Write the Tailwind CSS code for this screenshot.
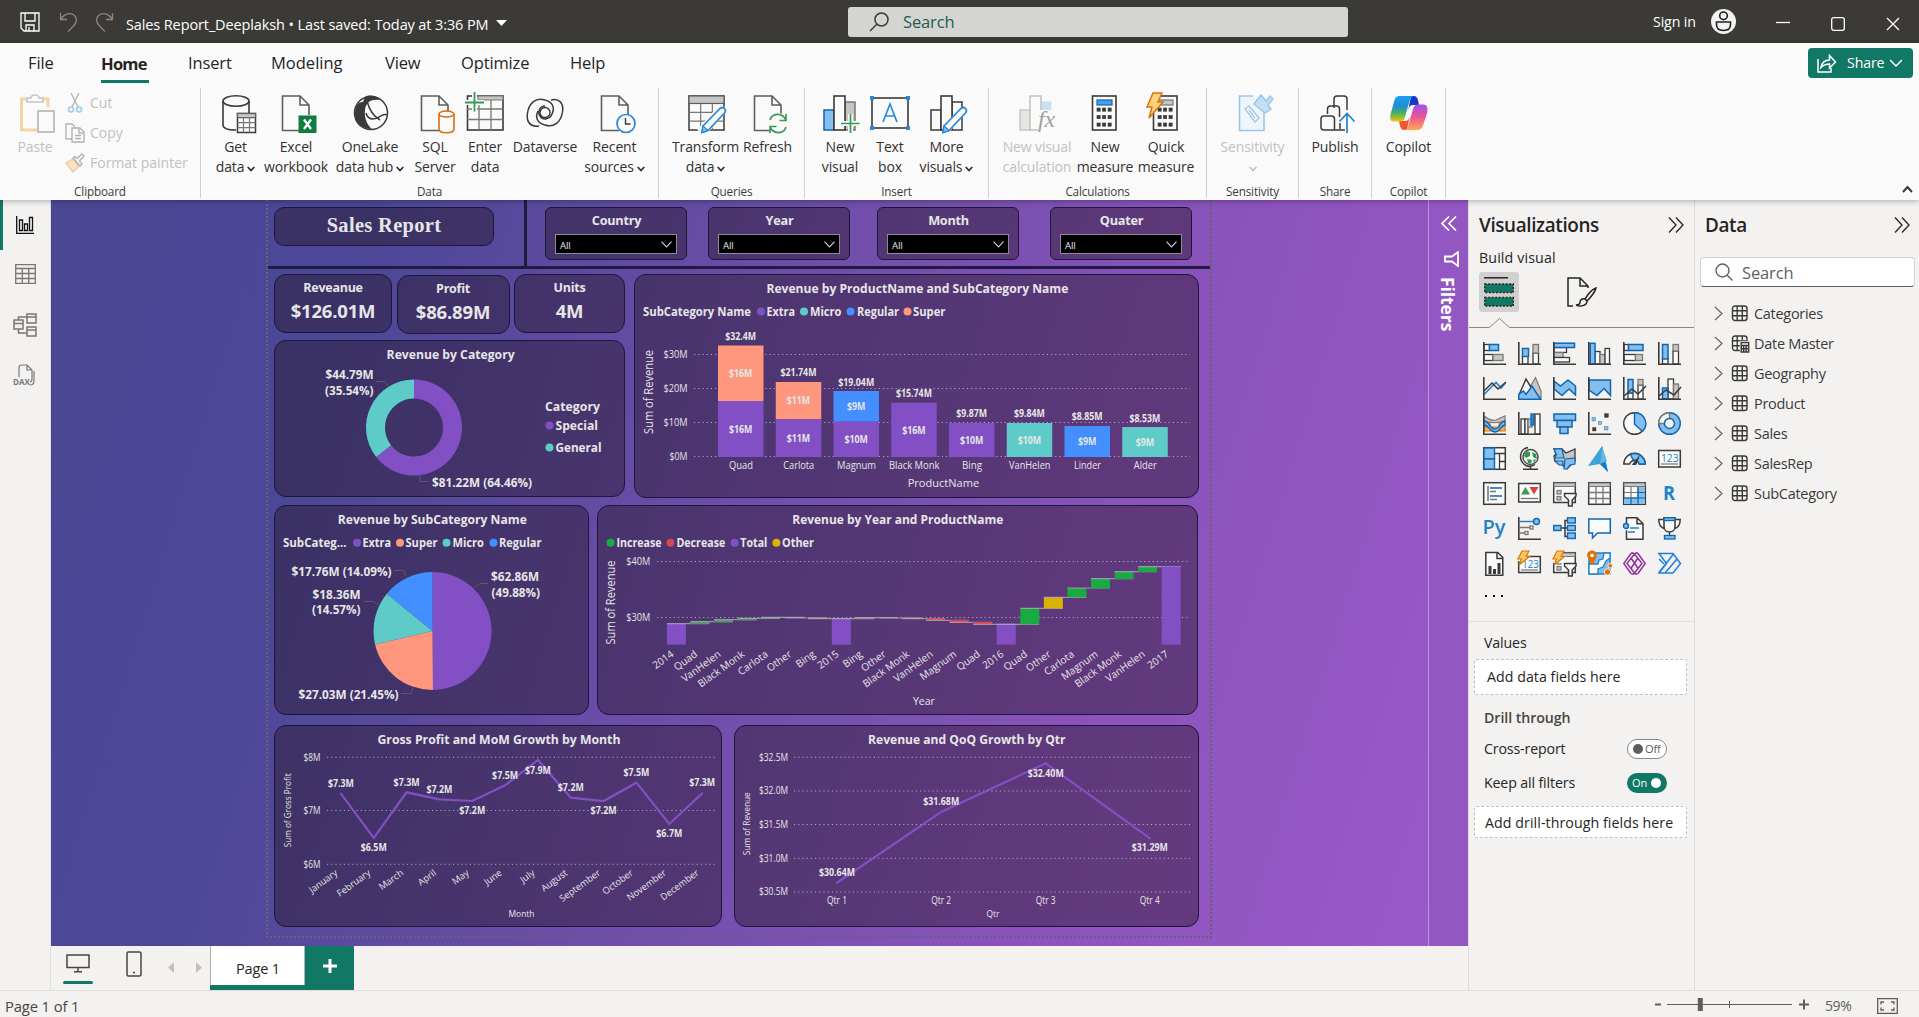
<!DOCTYPE html>
<html lang="en">
<head>
<meta charset="utf-8">
<title>Sales Report_Deeplaksh</title>
<script src="https://cdn.jsdelivr.net/npm/@tailwindcss/browser@4"></script>
</head>
<body class="w-[1919px] h-[1017px] overflow-hidden flex flex-col bg-[#f3f2f1] font-['Open_Sans',sans-serif] text-[14px] tracking-[-0.01em] text-[#252423] whitespace-nowrap">

<!-- Title bar -->
<header class="h-[43px] shrink-0 bg-[#3b3a37] text-white flex items-center">
  <svg class="ml-5 w-5 h-5" viewBox="0 0 20 20" fill="none" stroke="#fff" stroke-width="1.3"><path d="M1 1h18v18H4l-3-3zM5 1v8h10V1M6 19v-6h8v6M9 15v4"/></svg>
  <svg class="ml-[19px] w-[19px] h-5" viewBox="0 0 19 20" fill="none" stroke="#8a8886" stroke-width="1.3"><path d="M1.500 1v6.500h6.500M1.500 7.500C5 2 10 0.500 14 2.500c5 3 4 8 0 12l-5 5"/></svg>
  <svg class="ml-[17px] w-[19px] h-5" viewBox="0 0 19 20" fill="none" stroke="#8a8886" stroke-width="1.300"><path d="M17.500 1v6.500H11M17.500 7.500C14 2 9 0.500 5 2.500c-5 3-4 8 0 12l5 5"/></svg>
  <div class="ml-[12px] w-[362px] pt-[6px] text-[14.500px] tracking-[-0.008em]">Sales Report_Deeplaksh • Last saved: Today at 3:36 PM</div>
  <svg class="ml-[8px] mt-[2px] w-[11px] h-[6px]" viewBox="0 0 11 6"><path d="M0 0h11L5.500 6z" fill="#fff"/></svg>
  <div class="ml-[341px] w-[500px] h-[30px] rounded-[3px] bg-[#d4d4d2] flex items-center text-[#215c50]">
    <svg class="ml-[21px] w-5 h-5" viewBox="0 0 20 20" fill="none" stroke="#3b3a39" stroke-width="1.500"><circle cx="12.500" cy="7.500" r="6.500"/><path d="M8 12 1 19"/></svg>
    <div class="ml-[14px] pt-px text-[16.5px]">Search</div>
  </div>
  <div class="ml-[305px] w-[47px] text-[14.2px]">Sign in</div>
  <svg class="ml-[11px] w-[25px] h-[25px]" viewBox="0 0 25 25"><circle cx="12.500" cy="12.500" r="12.500" fill="#f3f2f1"/><g fill="none" stroke="#222" stroke-width="1.600"><circle cx="12.500" cy="6.800" r="3.800"/><path d="M5.500 13h14v2.500c0 4-3 6-7 6s-7-2-7-6z"/></g></svg>
  <svg class="ml-[40px] w-[14px] h-[14px]" viewBox="0 0 14 14" stroke="#fff" stroke-width="1.300"><path d="M0 7.500h14"/></svg>
  <svg class="ml-[41px] mt-1 w-[14px] h-[14px]" viewBox="0 0 14 14" fill="none" stroke="#fff" stroke-width="1.300"><rect x=".7" y=".7" width="12.600" height="12.600" rx="2"/></svg>
  <svg class="ml-[41px] mt-1 w-[14px] h-[14px]" viewBox="0 0 14 14" stroke="#fff" stroke-width="1.300"><path d="M1 1l12 12M13 1 1 13"/></svg>
</header>

<!-- Ribbon -->
<section class="h-[157px] shrink-0 bg-[#fafafa] relative z-10 shadow-[0_1px_6px_rgba(0,0,0,.3)]">
  <nav class="h-[45px] pl-7 flex items-center text-[16.5px]">
    <div class="w-[73px] pb-[5px]">File</div>
    <div class="w-[87px] flex"><div class="font-bold h-[30px] leading-[22px] tracking-[-0.045em] border-b-3 border-[#117865] mt-1 w-[48px]">Home</div></div>
    <div class="w-[83px] pb-[5px]">Insert</div>
    <div class="w-[114px] pb-[5px] tracking-[0]">Modeling</div>
    <div class="w-[76px] pb-[5px]">View</div>
    <div class="w-[109px] pb-[5px]">Optimize</div>
    <div class="pb-[5px]">Help</div>
    <div class="ml-auto mr-[6px] -mt-[5px] w-[105px] h-[30px] rounded bg-[#117865] text-white flex items-center text-[14.2px]">
      <svg class="ml-[9px] w-[20px] h-[19px]" viewBox="0 0 20 19" fill="none" stroke="#fff" stroke-width="1.500"><path d="M1 5v13h13v-4M4 13.500C5 8 8 6 12.500 6V1.500l6 6.500-6 6V10C9 10 6.500 11 4 13.500z"/></svg>
      <div class="ml-[10px] w-[38px]">Share</div>
      <svg class="ml-[5px] w-3 h-2" viewBox="0 0 12 8" fill="none" stroke="#fff" stroke-width="1.500"><path d="M0 1l6 6 6-6"/></svg>
    </div>
  </nav>

  <div class="h-[110px] flex leading-5" id="ribbon">
    <div class="w-[201px] border-r border-[#d2d0ce] flex flex-col justify-between items-center text-[#c3c1bf]">
      <div class="w-full flex">
        <div class="w-[70px] pt-[5px] flex flex-col items-center">
          <svg class="w-10 h-10" viewBox="0 0 40 40" fill="none" stroke-width="1.600"><path d="M11 6H6.500v31H22M28 6h5v8" stroke="#f3d5a5" stroke-width="3"/><path d="M12 9V5h4c0-4 8-4 8 0h4v4z" stroke="#c8c6c4" fill="#fafafa"/><rect x="23" y="18" width="16" height="21" fill="#fafafa" stroke="#b5b3b1"/></svg>
          <div class="pt-[4px]">Paste</div>
        </div>
        <div class="flex flex-col gap-[10px] pt-[5px] tracking-[0]">
          <div class="flex items-center h-5 -ml-[5px]"><svg class="w-[20px] h-[20px]" viewBox="0 0 20 20" fill="none" stroke="#b5b3b1" stroke-width="1.300"><path d="M6 0l7 14M14 0L7 14"/><g stroke="#9fcbe6" stroke-width="1.600"><circle cx="6" cy="16.500" r="2.500"/><circle cx="14" cy="16.500" r="2.500"/></g></svg><div class="ml-[5px]">Cut</div></div>
          <div class="flex items-center h-5 -ml-[5px]"><svg class="w-[20px] h-[20px]" viewBox="0 0 20 20" fill="#fafafa" stroke="#b5b3b1" stroke-width="1.400"><path d="M7 16H1V1h6l3 3"/><path d="M7 5h8l4 4v10H7zM14 5v5h5M10 12.500h6M10 15.500h6"/></svg><div class="ml-[5px]">Copy</div></div>
          <div class="flex items-center h-5 -ml-[5px]"><svg class="w-[20px] h-[20px]" viewBox="0 0 20 20" fill="none" stroke="#b5b3b1" stroke-width="1.400"><path d="M1 10l7-4 6 7-6 6z" fill="#f9e3c4" stroke="#efc99a"/><path d="M8 5l7 8 2-2-2.500-3L19 3l-2-2-5 4.500L10 3.500z" fill="#fafafa"/></svg><div class="ml-[5px]">Format painter</div></div>
        </div>
      </div>
      <div class="text-[11.700px] text-[#3b3a39] leading-[14px]">Clipboard</div>
    </div>

    <div class="w-[458px] border-r border-[#d2d0ce] flex flex-col justify-between items-center">
      <div class="w-full pl-[2px] flex" data-buttons="data"></div>
      <div class="text-[11.700px] text-[#3b3a39] leading-[14px]">Data</div>
    </div>
    <div class="w-[146px] border-r border-[#d2d0ce] flex flex-col justify-between items-center">
      <div class="w-full pl-[7px] flex" data-buttons="queries"></div>
      <div class="text-[11.700px] text-[#3b3a39] leading-[14px]">Queries</div>
    </div>
    <div class="w-[184px] border-r border-[#d2d0ce] flex flex-col justify-between items-center">
      <div class="w-full pl-[9px] flex" data-buttons="insert"></div>
      <div class="text-[11.700px] text-[#3b3a39] leading-[14px]">Insert</div>
    </div>
    <div class="w-[218px] border-r border-[#d2d0ce] flex flex-col justify-between items-center">
      <div class="w-full pl-[12px] flex" data-buttons="calc"></div>
      <div class="text-[11.700px] text-[#3b3a39] leading-[14px]">Calculations</div>
    </div>
    <div class="w-[92px] border-r border-[#d2d0ce] flex flex-col justify-between items-center">
      <div class="w-full flex" data-buttons="sens"></div>
      <div class="text-[11.700px] text-[#3b3a39] leading-[14px]">Sensitivity</div>
    </div>
    <div class="w-[73px] border-r border-[#d2d0ce] flex flex-col justify-between items-center">
      <div class="w-full flex" data-buttons="share"></div>
      <div class="text-[11.700px] text-[#3b3a39] leading-[14px]">Share</div>
    </div>
    <div class="w-[74px] border-r border-[#d2d0ce] flex flex-col justify-between items-center">
      <div class="w-full flex" data-buttons="copilot"></div>
      <div class="text-[11.700px] text-[#3b3a39] leading-[14px]">Copilot</div>
    </div>
    <div class="ml-auto mr-[6px] flex items-end pb-[5px]"><svg class="w-[11px] h-[8px]" viewBox="0 0 11 8" fill="none" stroke="#3b3a39" stroke-width="2"><path d="M1 7l4.500-5L10 7"/></svg></div>
  </div>
</section>

<!-- Workspace -->
<main class="h-[790px] shrink-0 flex">
  <aside class="w-[51px] border-r border-[#e1dfdd] flex flex-col">
    <div class="h-[50px] border-l-3 border-[#117865] flex items-center justify-center"><svg class="-ml-[4px] w-[18px] h-[18px]" viewBox="0 0 18 18" fill="none" stroke="#111" stroke-width="1.300"><path d="M.7 0v17.300H18M3.500 4h3v10.500h-3zM8.500 8h3v6.500h-3zM13.500 1.500h3v13h-3z"/></svg></div>
    <div class="h-[48px] flex items-center justify-center"><svg class="w-[21px] h-[20px]" viewBox="0 0 21 20" fill="none" stroke="#797775" stroke-width="1.300"><path d="M.7.7h19.600v18.600H.7zM.7 4.500h19.600M.7 9.500h19.600M.7 14.500h19.600M7.300 4.500v15M13.700 4.500v15"/></svg></div>
    <div class="h-[53px] flex items-center justify-center"><svg class="w-[24px] h-[24px]" viewBox="0 0 24 24" fill="none" stroke="#797775" stroke-width="1.500"><path d="M1 7h9v9H1zM1 10.500h9M14 1h9v9h-9zM14 4h9M14 14h9v9h-9zM14 17h9M5.500 7V4H14M5.500 16v4H14"/></svg></div>
    <div class="h-[48px] flex items-center justify-center"><svg class="-ml-[2px] w-[24px] h-[26px] overflow-visible" viewBox="0 0 24 26" fill="none" stroke="#797775" stroke-width="1.200"><path d="M7 15V6c0-2 1-3 3-3h5l5 5v9c0 2-1 3-2 3M15 3v5h5M22 9v10c0 2-1 4-4 4"/><text x="1" y="23" font-size="8.500" font-weight="700" letter-spacing="0" fill="#797775" stroke="none" textLength="17" lengthAdjust="spacingAndGlyphs">DAX</text></svg></div>
  </aside>

  <div class="w-[1417px] flex flex-col">
    <div class="h-[746px] flex">
      <div class="w-[1377px] bg-[linear-gradient(107deg,#4b4795_0%,#4c4796_20%,#6f4eab_49%,#8953bb_73%,#9a59ca_100%)]">
        <div class="ml-[215px] w-[946px] h-[738px] border-x-2 border-b-2 border-dotted border-[#65646a] text-[#e6e6e6]">
          <div class="h-[65px] flex items-start">
            <div class="mt-[7px] ml-[6px] w-[220px] h-[39px] rounded-[10px] border border-[#1c1838] bg-[rgba(32,18,28,.4)] flex items-center justify-center font-['Liberation_Serif',serif] font-bold text-[20.5px] tracking-[0.015em] pb-[2px]">Sales Report</div>
            <div class="ml-[30px] w-[3px] h-[66px] bg-[#1f1a3a]"></div>
            <div class="mt-[7px] ml-[18px] flex" id="slicers"></div>
          </div>
          <div class="h-[3px] mt-[0.5px] bg-[#231a42]"></div>

          <div class="mt-[5px] ml-[6px] flex">
            <div class="w-[351px]">
              <div class="flex gap-[4.5px] pt-[0.5px] font-bold text-center">
                <div class="w-[118px] h-[59px] rounded-[12px] border border-[#1c1838] bg-[rgba(32,18,28,.4)] pt-[4px]"><div class="text-[12.500px] leading-[18px] tracking-[-0.02em]">Reveanue</div><div class="text-[18.500px] leading-7 tracking-[-0.01em]">$126.01M</div></div>
                <div class="mt-px w-[113px] h-[59px] rounded-[12px] border border-[#1c1838] bg-[rgba(32,18,28,.4)] pt-[4px]"><div class="text-[12.500px] leading-[18px] tracking-[-0.02em]">Profit</div><div class="text-[18.500px] leading-7 tracking-[-0.01em]">$86.89M</div></div>
                <div class="w-[111px] h-[59px] rounded-[12px] border border-[#1c1838] bg-[rgba(32,18,28,.4)] pt-[4px]"><div class="text-[12.500px] leading-[18px] tracking-[-0.02em]">Units</div><div class="text-[18.500px] leading-7 tracking-[-0.01em]">4M</div></div>
              </div>
              <div class="mt-[6px] w-[351px] h-[157px] rounded-[12px] border border-[#1c1838] bg-[rgba(32,18,28,.4)]"><svg class="w-full h-full" viewBox="275 341 349 155" id="donut"></svg></div>
            </div>
            <div class="ml-[9px] w-[565px] h-[224px] rounded-[12px] border border-[#1c1838] bg-[rgba(32,18,28,.4)]"><svg class="w-full h-full" viewBox="635 275 563 222" id="stack"></svg></div>
          </div>

          <div class="mt-[7px] ml-[6px] flex gap-2">
            <div class="w-[315px] h-[210px] rounded-[12px] border border-[#1c1838] bg-[rgba(32,18,28,.4)]"><svg class="w-full h-full" viewBox="275 506 313 208" id="pie"></svg></div>
            <div class="w-[601px] h-[210px] rounded-[12px] border border-[#1c1838] bg-[rgba(32,18,28,.4)]"><svg class="w-full h-full" viewBox="598 506 599 208" id="fall"></svg></div>
          </div>

          <div class="mt-[10px] ml-[6px] flex gap-3">
            <div class="w-[448px] h-[202px] rounded-[12px] border border-[#1c1838] bg-[rgba(32,18,28,.4)]"><svg class="w-full h-full" viewBox="275 726 446 200" id="mom"></svg></div>
            <div class="w-[465px] h-[202px] rounded-[12px] border border-[#1c1838] bg-[rgba(32,18,28,.4)]"><svg class="w-full h-full" viewBox="735 726 463 200" id="qoq"></svg></div>
          </div>
        </div>
      </div>
      <!-- Collapsed filter pane -->
      <div class="w-10 border-l border-[#b79ad0] bg-[#9357c3] text-white flex flex-col items-center">
        <svg class="mt-[16px] w-[16px] h-[15px]" viewBox="0 0 16 15" fill="none" stroke="#fff" stroke-width="1.700"><path d="M8 .5l-7 7 7 7M15 .5l-7 7 7 7"/></svg>
        <svg class="mt-[20px] ml-[6px] w-[15px] h-[16px]" viewBox="0 0 15 16" fill="none" stroke="#fff" stroke-width="1.800"><path d="M14 1v14L8 10.500H1v-5h7z"/></svg>
        <div class="mt-[10px] -ml-[1px] font-bold text-[17.500px] leading-5 tracking-[-0.005em] [writing-mode:vertical-rl]">Filters</div>
      </div>
    </div>
    <!-- Page tabs -->
    <div class="h-[44px] flex">
      <div class="ml-[12px] w-[30px] flex flex-col items-center justify-between pt-[8px] pb-[6px]"><svg class="w-[24px] h-[19px]" viewBox="0 0 24 19" fill="none" stroke="#484644" stroke-width="1.500"><path d="M1 1h22v12.500H1zM12 13.500V17M8 17.800h8"/></svg><div class="w-[30px] h-[3px] rounded-full bg-[#117865]"></div></div>
      <svg class="ml-[33px] mt-[5px] w-[16px] h-[26px]" viewBox="0 0 16 26" fill="none" stroke="#484644" stroke-width="1.500"><rect x="1" y="1" width="14" height="24" rx="1.500"/><path d="M7 21.500h2"/></svg>
      <svg class="ml-[26px] mt-[16px] w-[6px] h-[11px]" viewBox="0 0 6 11"><path d="M6 0v11L0 5.500z" fill="#c2c0be"/></svg>
      <svg class="ml-[22px] mt-[16px] w-[6px] h-[11px]" viewBox="0 0 6 11"><path d="M0 0v11l6-5.500z" fill="#c2c0be"/></svg>
      <div class="ml-[8px] w-[95px] bg-white border-x border-[#b3b0ad] flex flex-col"><div class="grow flex items-center justify-center pt-[6px] pl-px text-[14.500px]">Page 1</div><div class="h-[5px] bg-[#117865] -mx-px"></div></div>
      <div class="w-[49px] bg-[#117865] flex items-center justify-center pb-1"><svg class="w-[14px] h-[14px]" viewBox="0 0 14 14" stroke="#fff" stroke-width="3"><path d="M7 0v14M0 7h14"/></svg></div>
    </div>
  </div>

  <!-- Visualizations pane -->
  <aside class="w-[227px] border-x border-[#dddbd9] flex flex-col text-[14.2px]">
    <div class="pl-[10px] pt-[12px] h-[45px] flex items-start justify-between"><div class="font-semibold text-[18.900px] leading-[26px] tracking-[-0.02em]">Visualizations</div><svg class="mt-[5px] mr-[10px] w-[16px] h-[16px]" viewBox="0 0 16 16" fill="none" stroke="#252423" stroke-width="1.300"><path d="M1 .5l7 7.500-7 7.500M8 .5l7 7.500-7 7.500"/></svg></div>
    <div class="pl-[10px] h-[27px] leading-[26px] tracking-[0.01em]">Build visual</div>
    <div class="pl-[10px] h-[40px] flex items-center">
      <div class="w-10 h-10 rounded-[3px] bg-[#d2d0ce] flex items-center justify-center"><svg class="w-[30px] h-[30px]" viewBox="0 0 30 30" stroke="#252423"><path d="M0 .8h24" stroke-width="1.500"/><g fill="#117865" stroke-width="1.500" stroke-dasharray="2 1.500"><rect x=".7" y="7" width="28.600" height="8.500"/><rect x=".7" y="20.500" width="28.600" height="8.500"/></g></svg></div>
      <svg class="ml-[48px] w-[30px] h-[30px]" viewBox="0 0 30 30" fill="none" stroke="#252423" stroke-width="1.500"><path d="M6 29H1V1h12l8 8v2M13 1v8h8"/><path d="M29 11c-3 1-8 6-11 11l2 2c4-4 8-9 9-13zM18 22c-3-1-5 1-5 3s-2 3-4 3c4 2 11 1 11-4z"/></svg>
    </div>
    <svg class="mt-[6px] w-[225px] h-[10px] shrink-0" viewBox="0 0 225 10" fill="none" stroke="#8a8886" stroke-width="1"><path d="M0 9.500h20.500L30.500.5l10 9H225"/></svg>
    <div class="mt-[13px] ml-[14px] grid grid-cols-[repeat(6,23px)] auto-rows-[25px] gap-x-3 gap-y-[10px]" id="gallery"></div>
    <div class="mt-[12px] ml-[16px] h-4 flex items-center gap-[6px]"><i class="w-[2px] h-[2px] bg-black"></i><i class="w-[2px] h-[2px] bg-black"></i><i class="w-[2px] h-[2px] bg-black"></i></div>
    <div class="mt-[17px] border-t border-[#e1dfdd] h-[38px] pl-[15px] pt-[11px] leading-5">Values</div>
    <div class="ml-[5px] w-[213px] h-[36px] bg-white border border-dashed border-[#c2c0be] rounded-[2px] pl-[12px] leading-[34px] tracking-[0.003em]">Add data fields here</div>
    <div class="pl-[15px] mt-[13px] leading-5 font-semibold text-[#484644] tracking-[-0.005em]">Drill through</div>
    <div class="pl-[15px] mt-[11px] h-5 flex items-center"><div class="w-[143px]">Cross-report</div><div class="w-10 h-5 rounded-full border border-[#8a8886] bg-white flex items-center pl-[5px] gap-[2px] text-[11px] text-[#605e5c]"><i class="w-[10px] h-[10px] rounded-full bg-[#605e5c]"></i><span class="pt-px">Off</span></div></div>
    <div class="pl-[15px] mt-[14px] h-5 flex items-center"><div class="w-[143px]">Keep all filters</div><div class="w-10 h-5 rounded-full bg-[#117865] flex items-center pl-[5px] gap-[4px] text-[11px] text-white"><span class="pt-px">On</span><i class="w-[10px] h-[10px] rounded-full bg-white"></i></div></div>
    <div class="mt-[13px] ml-[5px] w-[213px] h-[32px] bg-white border border-dashed border-[#c2c0be] rounded-[2px] pl-[10px] leading-[31px] tracking-[0.005em]">Add drill-through fields here</div>
  </aside>

  <!-- Data pane -->
  <aside class="grow flex flex-col text-[14.2px]">
    <div class="pl-[10px] pt-[12px] h-[45px] flex items-start justify-between"><div class="font-semibold text-[18.900px] leading-[26px] tracking-[-0.02em]">Data</div><svg class="mt-[5px] mr-[9px] w-[16px] h-[16px]" viewBox="0 0 16 16" fill="none" stroke="#252423" stroke-width="1.300"><path d="M1 .5l7 7.500-7 7.500M8 .5l7 7.500-7 7.500"/></svg></div>
    <div class="mt-[12px] ml-[5px] w-[215px] h-[30px] rounded-[4px] bg-white border border-[#d1d1d1] border-b-[#616161] flex items-center text-[16.500px] text-[#616161]"><svg class="ml-[14px] w-[18px] h-[18px]" viewBox="0 0 18 18" fill="none" stroke="#616161" stroke-width="1.400"><circle cx="7.500" cy="7.500" r="6.500"/><path d="M12 12l5.500 5.500"/></svg><div class="ml-[9px] pt-[3px]">Search</div></div>
    <div class="mt-[11px]" id="tables"></div>
  </aside>
</main>

<!-- Status bar -->
<footer class="h-[27px] border-t border-[#e1dfdd] flex items-center text-[#484644] text-[14.800px] pt-[4px]">
  <div class="ml-[5px] w-[80px]">Page 1 of 1</div>
  <svg class="ml-[1569px] -mt-[2px] w-[156px] h-[14px]" viewBox="1654 999 156 14" stroke="#605e5c" fill="none"><path d="M1655 1005.500h6M1799 1005.500h10M1804 1000.500v10" stroke-width="2"/><path d="M1667 1005.500h125M1729.500 1002v7"/><path d="M1700.300 999v13" stroke-width="5"/></svg>
  <div class="ml-[15px] -mt-[2px] w-[29px] text-[14px] tracking-[-0.03em] text-[#605e5c]">59%</div>
  <svg class="ml-[23px] -mt-px w-[21px] h-[16px]" viewBox="0 0 21 16" fill="none" stroke="#605e5c" stroke-width="1.300"><path d="M.7.7h19.600v14.600H.7z"/><path d="M7 4H4v2.500M14 4h3v2.500M7 12H4V9.500M14 12h3V9.500"/></svg>
</footer>

<script>
const K = '#3b3a39', B = '#83beec', S = '#1066b0', G = '#c8c6c4', GS = '#797775', W = '#fafafa';
const R = (x1, y1, x2, y2, f = W, s = K, w = 1.3) => `<rect x="${x1}" y="${y1}" width="${x2 - x1}" height="${y2 - y1}" fill="${f}" stroke="${s}" stroke-width="${w}"/>`;
const P = (d, s = K, w = 1.4, f = 'none') => `<path d="${d}" fill="${f}" stroke="${s}" stroke-width="${w}"/>`;
const C = (x, y, r, f = 'none', s = K, w = 1.3) => `<circle cx="${x}" cy="${y}" r="${r}" fill="${f}" stroke="${s}" stroke-width="${w}"/>`;

/* ---- ribbon buttons ---- */
const doc = P('M33 22V12L24 3H6.500V37.500H24M24 3v9h9', '#605e5c', 1.6, W);
const grid = (x, y, w, h) => R(x, y, x + w, y + h, W, K, 1.5) + R(x, y, x + w, y + h * .22, G, '#605e5c', 1.2) +
  P(`M${x} ${y + h * .48}h${w}M${x} ${y + h * .74}h${w}M${x + w / 3} ${y + h * .22}v${h * .78}M${x + w * 2 / 3} ${y + h * .22}v${h * .78}`, '#797775', 1.2);
const pencil = P('M17 33L34 15.500q2.500-2 4.500 0t0 4.500L22 37.500l-6 2z', '#2b88d8', 1.7, W) + P('M17 33l5 4.500-6 2z', '#2b88d8', 1.2, B);
const calcpad = (o = '') => R(7.500, 3, 31, 37, W, K, 1.6) + R(12, 7, 27, 12, o || '#4aa0e6', o ? GS : S, 1.2) +
  [16, 23.500, 31].map(y => [12, 17.500, 23].map(x => R(x, y - 1, x + 3.2, y + 2.200, K, K, .6)).join('')).join('');
const bars = (a, b) => R(4, 17, 14, 37, a, a === W ? K : S, 1.5) + R(25, 9, 35, 37, b, b === W ? K : GS, 1.5) + R(14, 3, 25, 37, W, K, 1.6);
const icons = {
  get: P('M7 8v24c0 3 5 5 13 5M33 8v13', K, 1.6) + `<ellipse cx="20" cy="8" rx="13" ry="5.300" fill="none" stroke="${K}" stroke-width="1.600"/>` + grid(21.500, 20.500, 18, 19),
  excel: doc + '<rect x="22.500" y="22.500" width="18" height="17.500" fill="#107c41"/>' + P('M28 26.500l7 9.500M35 26.500l-7 9.500', '#fff', 2.300),
  lake: C(21, 20, 16.500, W, K, 1.500) + '<path d="M15 4C20 1 27 3 30 7 22 6 16 8 15 17 14 26 18 33 22 36 10 36 4 28 5 19c1-8 4-10 8-10z" fill="#3b3a39"/>' + P('M17 8c2 8 6 15 13 19M37 22c-4-3-8 4-14 4-3 0-6-2-7-6', K, 1.500),
  sql: doc + `<path d="M24 21v15c0 5 15 5 15 0V21" fill="${W}" stroke="#d86f11" stroke-width="1.600"/><ellipse cx="31.500" cy="21" rx="7.500" ry="3" fill="${W}" stroke="#d86f11" stroke-width="1.600"/>`,
  enter: R(2.500, 3, 38, 37, W, K, 1.600) + R(13, 3, 38, 7, G, GS, 1) + P('M2 16h36M2 26.500h36M14 10v27M26 7v30', GS, 1.300) + P('M9.500 0v20M0 9.500h19', W, 5) + P('M9.500 -1v19.500M0 9.500h19', '#2f9e52', 1.800),
  verse: P('M14 33C6 34 1 30 2.500 20 4 10 11 4 20 7c8 2 10 8 7 14-2 5-9 7-12 2-3-4 0-10 5-10M26 7c8-2 13 3 11.500 12C36 29 29 35 20 32c-8-2-10-8-7-14', K, 1.500) + C(20, 19.500, 5, 'none', K, 1.400),
  recent: doc + C(31, 30.500, 9, W, '#2b88d8', 1.700) + P('M30.500 25v6h5', K, 1.400),
  trans: grid(3, 3, 35, 34) + P('M15 40L38 14', W, 10) + pencil,
  refresh: doc + C(30, 30.500, 10, W, W, 1) + P('M22 27c2-7 12-8 16 0M38 21v6.500h-6.500M38 34c-2 7-12 8-16 0M22 40v-6.500h6.500', '#3b9b56', 1.700),
  newv: bars(B, G) + P('M30.500 21v19M21 30.500h18', W, 5) + P('M30.500 21v19M21 30.500h18.500', '#2f9e52', 1.700),
  text: R(2, 5, 38, 35, W, K, 1.600) + [[0, 3], [36, 3], [0, 33], [36, 33]].map(p => `<rect x="${p[0]}" y="${p[1]}" width="4" height="4" fill="#2b88d8"/>`).join('') + P('M13 29l7-18 7 18M15.500 23h9', '#2b88d8', 1.700),
  more: bars(W, W) + P('M18 38L36 17', W, 8) + pencil,
  fx: `<g opacity=".4">${R(3, 17, 13, 37, G, GS, 1.500) + R(24, 9, 34, 17, B, B, 1) + R(13, 3, 24, 37, W, GS, 1.600)}</g><rect x="21" y="17" width="18" height="21" fill="${W}"/><text x="21" y="34" font-family="Liberation Serif" font-style="italic" font-size="24" fill="#a19f9d">fx</text>`,
  calc: calcpad(),
  quick: calcpad('#c8c6c4') + P('M7 0h9l-4 9h5L3 25l3-11H1z', '#d8760c', 1.500, '#fcd27d'),
  sens: `<g opacity=".45">${P('M31 20v17.500H6.500V3H20', '#2b88d8', 1.600, '#e3f0fa') + P('M12 16l4-3 10 12-4 4zM16 17l6 8', '#2b88d8', 1.300, W) + P('M21 11l7-9 5 6 4-5 3 3-5 6 3 4-6 4z', '#2b88d8', 1.500, B)}</g>`,
  publish: P('M19 15V6q0-3 3-3h7q3 0 3 3v11M12.500 21v-5q0-3 3-3h6q3 0 3 3v8M19.500 37V26q0-3-3-3H9q-3 0-3 3v8q0 3 3 3h21M25 30v6', K, 1.500) + P('M32 40V21M24.500 28.500l7.500-8 7.500 8', '#2083c8', 1.700),
  copilot: `<defs><linearGradient id="c1" x1="0" y1="0" x2="0" y2="1"><stop offset="0" stop-color="#1aa0f5"/><stop offset=".4" stop-color="#1f8ecf"/><stop offset=".7" stop-color="#52b45b"/><stop offset="1" stop-color="#f3c40b"/></linearGradient><linearGradient id="c2" x1="0" y1="0" x2="0" y2="1"><stop offset="0" stop-color="#a24df0"/><stop offset=".5" stop-color="#ec5592"/><stop offset="1" stop-color="#ffab52"/></linearGradient></defs>
    <path d="M22 3h3c3 0 4 3 5 9h-6c-3 0-4 2-5 6z" fill="#1738c4"/><path d="M18 37h-3c-3 0-4-3-5-9h6c3 0 4-2 5-6z" fill="#f0562f"/>
    <path d="M11 3h14c-3 0-4 3-5 7l-4 14c-1 3-2 4.500-5 4.500H5c-5 0-4-5-3-9L5 9c1-4 2-6 6-6z" fill="url(#c1)"/>
    <path d="M28 37H15c3 0 4-3 5-7l4-14c1-3 2-4.500 5-4.500h5c5 0 5 5 4 9L34.500 31c-1 4-3 6-6.500 6z" fill="url(#c2)"/>`
};
const groups = {
  data: [['get', 'Get', 'data', 65, 1], ['excel', 'Excel', 'workbook', 56], ['lake', 'OneLake', 'data hub', 92, 1], ['sql', 'SQL', 'Server', 38], ['enter', 'Enter', 'data', 62], ['verse', 'Dataverse', '', 58], ['recent', 'Recent', 'sources', 81, 1]],
  queries: [['trans', 'Transform', 'data', 79, 1], ['refresh', 'Refresh', '', 45]],
  insert: [['newv', 'New', 'visual', 52], ['text', 'Text', 'box', 48], ['more', 'More', 'visuals', 65, 1]],
  calc: [['fx', 'New visual', 'calculation', 72, 0, 1], ['calc', 'New', 'measure', 64], ['quick', 'Quick', 'measure', 58]],
  sens: [['sens', 'Sensitivity', '', 91, 1, 1]],
  share: [['publish', 'Publish', '', 72]],
  copilot: [['copilot', 'Copilot', '', 73]]
};
for (const [g, list] of Object.entries(groups)) {
  document.querySelector(`[data-buttons="${g}"]`).innerHTML = list.map(([i, a, b, w, chev, off]) =>
    `<div class="pt-[5px] flex flex-col items-center shrink-0 ${off ? 'text-[#c3c1bf]' : 'text-[#323130]'}" style="width:${w}px">
      <svg class="w-10 h-10 overflow-visible shrink-0" viewBox="0 0 40 40">${icons[i]}</svg>
      <div class="pt-[4px]">${a}</div>
      <div class="flex items-center gap-[3px] h-5">${b ? `<span>${b}</span>` : ''}${chev ? '<svg class="w-[8px] h-[6px] mt-1" viewBox="0 0 8 6" fill="none" stroke="currentColor" stroke-width="1.800"><path d="M.7 1L4 4.500 7.300 1"/></svg>' : ''}</div></div>`).join('');
}

/* ---- slicers ---- */
document.getElementById('slicers').innerHTML = [['Country', 0], ['Year', 21], ['Month', 27], ['Quater', 31]].map(([n, m]) =>
  `<div class="w-[142px] h-[53px] rounded-[6px] border border-[#1c1838] bg-[rgba(32,18,28,.4)] px-[9px] pt-[3px]" style="margin-left:${m}px">
    <div class="text-center font-bold text-[12.700px] leading-[18px] tracking-[-0.02em] pl-px">${n}</div>
    <div class="mt-[5px] h-[20px] w-[122px] bg-black border border-[#8d8a93] flex items-center justify-between pl-[4px] pr-[4px] text-[9.700px]"><span class="pt-[4px]">All</span><svg class="w-[11px] h-[7px]" viewBox="0 0 11 7" fill="none" stroke="#d0d0d0" stroke-width="1.100"><path d="M.5.7l5 5.300 5-5.300"/></svg></div></div>`).join('');

/* ---- charts ---- */
const INK = '#e6e6e6', VI = '#8250c4', OR = '#ff977e', TE = '#5ecbc8', BL = '#438fff';
const T = (x, cy, s, size, len, { a = 'middle', b = 0, r = 0, f = INK } = {}) =>
  `<text x="${x}" y="${cy + size * .36}" font-size="${size}" font-weight="${b ? 700 : 400}" fill="${f}" letter-spacing="0" text-anchor="${a}" ${len ? `textLength="${len}" lengthAdjust="spacingAndGlyphs"` : ''} ${r ? `transform="rotate(${r} ${x} ${cy})"` : ''}>${s}</text>`;
const dot = (x, y, c) => `<circle cx="${x}" cy="${y}" r="4" fill="${c}"/>`;
const hline = (x1, x2, y) => `<path d="M${x1} ${y}H${x2}" stroke="#fff" stroke-opacity=".55" stroke-width="1" stroke-dasharray="1.200 3"/>`;
const L = { a: 'start', b: 1 }, E = { a: 'end' }, EB = { a: 'end', b: 1 }, M = { b: 1 };
const set = (id, h) => document.getElementById(id).innerHTML = h;
const slice = (cx, cy, r, ri, a, b, c) => {
  const p = (q, t) => `${cx + q * Math.sin(t * 2 * Math.PI)} ${cy - q * Math.cos(t * 2 * Math.PI)}`, l = b - a > .5 ? 1 : 0;
  return `<path fill="${c}" d="M${p(r, a)}A${r} ${r} 0 ${l} 1 ${p(r, b)}L${p(ri, b)}${ri ? `A${ri} ${ri} 0 ${l} 0 ${p(ri, a)}` : ''}Z"/>`;
};
const lead = d => `<path d="${d}" fill="none" stroke="#5d5670" stroke-width="1"/>`;

set('donut', T(450.6, 354.3, 'Revenue by Category', 12.8, 128, M) +
  slice(414, 427.500, 48, 29, 0, .6446, VI) + slice(414, 427.500, 48, 29, .6446, 1, TE) +
  lead('M376 381.500h9l3 4.500') + lead('M420 475.500v6h9') +
  T(373.500, 374.700, '$44.79M', 11.800, 48, EB) + T(373.500, 390.500, '(35.54%)', 11.800, 48.500, EB) + T(432, 482.500, '$81.22M (64.46%)', 11.800, 100, L) +
  T(545, 406.500, 'Category', 12.500, 55, L) + dot(549.500, 425.500, VI) + T(555.500, 425.500, 'Special', 12.500, 42.500, L) + dot(549.500, 447.500, TE) + T(555.500, 447.500, 'General', 12.500, 46, L));

let h = T(917.400, 288.500, 'Revenue by ProductName and SubCategory Name', 12.800, 302, M) + T(643, 312, 'SubCategory Name', 12.300, 108, L);
[[761, VI, 766.500, 'Extra', 28.500], [804, TE, 810, 'Micro', 31.500], [850.500, BL, 857, 'Regular', 42], [907.500, OR, 913, 'Super', 32.500]].forEach(d => h += dot(d[0], 311.500, d[1]) + T(d[2], 312, d[3], 12.300, d[4], L));
[['$30M', 354.500], ['$20M', 388.500], ['$10M', 422.500], ['$0M', 456.500]].forEach(d => h += hline(694, 1190, d[1]) + T(687.500, d[1], d[0], 10.500, d[0].length * 6, E));
h += T(649, 392, 'Sum of Revenue', 11.800, 84, { r: -90 });
[['Quad', 24, 345.500, 336.700, '$32.4M', [[345.500, 401, OR, '$16M'], [401, 457, VI, '$16M']]],
 ['Carlota', 31, 0, 372.700, '$21.74M', [[382, 419.300, OR, '$11M'], [419.300, 457, VI, '$11M']]],
 ['Magnum', 39, 0, 382.700, '$19.04M', [[391, 421.700, BL, '$9M'], [421.700, 457, VI, '$10M']]],
 ['Black Monk', 50.500, 0, 393.700, '$15.74M', [[402.700, 457, VI, '$16M']]],
 ['Bing', 20, 0, 413.700, '$9.87M', [[423, 457, VI, '$10M']]],
 ['VanHelen', 41.500, 0, 413.700, '$9.84M', [[423, 457, TE, '$10M']]],
 ['Linder', 27, 0, 416.700, '$8.85M', [[426, 457, BL, '$9M']]],
 ['Alder', 23, 0, 418.700, '$8.53M', [[427, 457, TE, '$9M']]]].forEach((d, i) => {
  const x = 718 + i * 57.750;
  d[5].forEach(s => h += `<rect x="${x}" y="${s[0]}" width="45.500" height="${s[1] - s[0]}" fill="${s[2]}"/>` + T(x + 22.700, (s[0] + s[1]) / 2, s[3], 10.300, s[3].length > 3 ? 23.500 : 18.500, M));
  h += T(x + 22.700, d[3], d[4], 10.300, d[4].length > 6 ? 36 : 31, M) + T(x + 23, 465.700, d[0], 10, d[1]);
});
set('stack', h + T(943.400, 483, 'ProductName', 11.500, 71.500));

h = T(432.300, 519.500, 'Revenue by SubCategory Name', 12.800, 189, M) + T(283, 543, 'SubCateg...', 12.300, 63.500, L);
[[357, VI, 362.500, 'Extra', 28.500], [400, OR, 405.500, 'Super', 32], [446.500, TE, 452.500, 'Micro', 31.500], [493.500, BL, 499, 'Regular', 42.500]].forEach(d => h += dot(d[0], 542.700, d[1]) + T(d[2], 543, d[3], 12.300, d[4], L));
h += slice(432.500, 631, 59, 0, 0, .4988, VI) + slice(432.500, 631, 59, 0, .4988, .7133, OR) + slice(432.500, 631, 59, 0, .7133, .859, TE) + slice(432.500, 631, 59, 0, .859, 1, BL);
h += lead('M394 570.500h9.500l3 6') + lead('M364 601.500h9l5 3') + lead('M488 583.500h-8l-5.500 4') + lead('M401 693.500h10l2-6');
set('pie', h + T(291.500, 572, '$17.76M (14.09%)', 11.800, 100, L) + T(360.500, 594.500, '$18.36M', 11.800, 48, EB) + T(360.500, 610, '(14.57%)', 11.800, 48.500, EB) +
  T(491, 576.500, '$62.86M', 11.800, 48, L) + T(491.500, 592.500, '(49.88%)', 11.800, 48.500, L) + T(298.500, 694.500, '$27.03M (21.45%)', 11.800, 100, L));

h = T(897.800, 519.500, 'Revenue by Year and ProductName', 12.800, 211, M);
[[610.500, '#1aab40', 616.500, 'Increase', 45], [670.400, '#d64550', 676.400, 'Decrease', 49], [734.600, VI, 740.300, 'Total', 27], [776.400, '#d9b300', 782, 'Other', 32]].forEach(d => h += dot(d[0], 542.700, d[1]) + T(d[2], 543, d[3], 12.300, d[4], L));
h += hline(657, 1188, 561.500) + hline(657, 1188, 617.500) + T(650.300, 561.700, '$40M', 10.500, 24, E) + T(650.300, 617, '$30M', 10.500, 24, E) + T(610.500, 602.500, 'Sum of Revenue', 11.800, 84, { r: -90 });
const GN = '#1aab40', RD = '#d64550', YE = '#d9b300', MG = '#4f9a62', MR = '#b07a84';
[['2014', 386, 449, VI], ['Quad', 380, 387, MG], ['VanHelen', 374, 382, MG], ['Black Monk', 370, 376, MG], ['Carlota', 367, 371, '#6d9a80'], ['Other', 366, 369, '#a8a58a'], ['Bing', 366, 371, MR], ['2015', 371, 449, VI], ['Bing', 368, 371, '#7f9a88'], ['Other', 366, 369, '#a8a58a'], ['Black Monk', 367, 371, MR], ['VanHelen', 370, 376, RD], ['Magnum', 375, 382, RD], ['Quad', 381, 388, RD], ['2016', 388, 449, VI], ['Quad', 340, 388, GN], ['Other', 307, 340, YE], ['Carlota', 279, 307, GN], ['Magnum', 251, 280, GN], ['Black Monk', 230, 252, GN], ['VanHelen', 215, 231, GN], ['2017', 215, 449, VI]].forEach((d, i) => {
  const x = 666.900 + i * 23.560, y1 = 495 + d[1] / 3, y2 = 495 + d[2] / 3;
  h += `<rect x="${x}" y="${y1}" width="19" height="${y2 - y1}" fill="${d[3]}"/>`;
  const up = i > 14 || i < 5 || (i > 7 && i < 9), cy = d[3] === VI || up ? y1 : y2;
  if (i < 21) h += `<path d="M${x} ${cy}H${x + 42.500}" stroke="#b3aebf" stroke-opacity=".75" stroke-width="1.200"/>`;
  h += T(x + 5.500, 652.700, d[0], 10.200, 0, { a: 'end', r: -36 });
});
set('fall', h + T(923.900, 701, 'Year', 11.300, 22));

h = T(499, 739.300, 'Gross Profit and MoM Growth by Month', 12.800, 243, M);
[['$8M', 757.300], ['$7M', 810.500], ['$6M', 864.300]].forEach(d => h += hline(327, 715, d[1]) + T(320.500, d[1] - .3, d[0], 10, 17, E));
h += T(287.500, 810.300, 'Sum of Gross Profit', 9.600, 74, { r: -90 });
const mo = [236, 369, 232, 253, 258, 211, 135, 248, 258, 203, 327, 235], ml = [205, 398, 203, 224, 287, 182, 167, 217, 287, 173, 356, 203],
  mv = ['7.3', '6.5', '7.3', '7.2', '7.2', '7.5', '7.9', '7.2', '7.2', '7.5', '6.7', '7.3'],
  mn = ['January', 'February', 'March', 'April', 'May', 'June', 'July', 'August', 'September', 'October', 'November', 'December'];
const mx = i => 340.900 + i * 32.840;
h += `<polyline points="${mo.map((y, i) => mx(i) + ',' + (715 + y / 3)).join(' ')}" fill="none" stroke="${VI}" stroke-width="2.200" stroke-linecap="round"/>`;
mo.forEach((_, i) => h += T(mx(i), 715 + ml[i] / 3, `$${mv[i]}M`, 10.300, 26, M) + T(mx(i) - 4.500, 871.500, mn[i], 9.300, 0, { a: 'end', r: -36 }));
set('mom', h + T(521.500, 913.500, 'Month', 9.800, 26));

h = T(966.800, 739.300, 'Revenue and QoQ Growth by Qtr', 12.800, 197.500, M);
[['$32.5M', 757.300], ['$32.0M', 791], ['$31.5M', 824.500], ['$31.0M', 858.300], ['$30.5M', 892]].forEach(d => h += hline(794, 1190, d[1]) + T(788, d[1] - .3, d[0], 10, 29, E));
h += T(747, 823.700, 'Sum of Revenue', 9.600, 63, { r: -90 }) + `<polyline points="836.700,883 941.600,811.700 1045.700,763.300 1150,838.300" fill="none" stroke="${VI}" stroke-width="2.200" stroke-linecap="round"/>`;
[[837, 872.700, '$30.64M'], [941.200, 801.700, '$31.68M'], [1045.700, 773.700, '$32.40M'], [1149.800, 847.700, '$31.29M']].forEach((d, i) => h += T(d[0], d[1], d[2], 10.300, 36, M) + T(d[0], 900.700, 'Qtr ' + (i + 1), 10, 20));
set('qoq', h + T(993, 913.500, 'Qtr', 9.800, 13));

/* ---- visual gallery ---- */
const A = P('M.8 0V22.200H23', K, 1.600), bolt = P('M4-1h7L8 4.500h3.500L1 13l2.500-6H0z', '#d8760c', 1.200, '#fcc765'), OG = '#e07008';
const tb = R(.7, .7, 22.300, 22.300, W, K, 1.500), slc = R(.7, .7, 22.300, 20.500, W, K, 1.500) + R(1, 1, 22, 4.500, G, GS, 1) + R(4, 8.500, 8, 12, G, GS, 1.200) + R(4, 14.500, 8, 18, G, GS, 1.200) + P('M11.500 11.500H23v2.500l-3.800 4V24h-3.700v-6l-4-4z', K, 1.500, W);
const txt = (s, x, y, z, len, w = 400) => `<text x="${x}" y="${y}" font-size="${z}" font-weight="${w}" fill="#2083c8" letter-spacing="0" textLength="${len}" lengthAdjust="spacingAndGlyphs">${s}</text>`;
const vis = [
  R(1, 2.500, 6.500, 8.500) + R(6.500, 2.500, 15.500, 8.500, B, S, 1.500) + R(1, 12.500, 10, 18.500) + R(10, 12.500, 20, 18.500, G, GS) + A,
  R(4.500, 14, 10, 22) + R(4.500, 6.500, 10.500, 14.500, B, S, 1.500) + R(15, 11, 20.500, 22) + R(15, 2.500, 20.500, 11, G, GS) + A,
  R(1, 5.500, 13.500, 10.500) + R(1, 10.500, 10, 15.500, G, GS) + R(1, 15.500, 16.500, 20) + R(1, 1.200, 21.500, 5.500, B, S, 1.500) + A,
  R(7, 9.500, 12, 22) + R(12, 12.500, 17, 22, G, GS) + R(17, 6.500, 21.500, 22) + R(2.200, 1.300, 7, 22, B, S, 1.500) + A,
  R(1, 2.500, 5.500, 8.500) + R(5.500, 2.500, 20, 8.500, B, S, 1.500) + R(1, 12.500, 12.500, 18.500) + R(12.500, 12.500, 19.500, 18.500, G, GS) + A,
  R(4.500, 16, 10, 22) + R(4.500, 2.500, 10, 17, B, S, 1.500) + R(15, 9, 20.500, 22) + R(15, 2.500, 20.500, 9, G, GS) + A,
  P('M1 17.500L13 5.500l5 5.500 4.500-5', '#2083c8', 1.600) + P('M1 14l8-8 6 6 8-7', K, 1.500) + A,
  P('M12 10L17.500.5 23 14v8z', GS, 1.200, G) + P('M1 18L8 2l8 13', K, 1.500, W) + P('M.8 22.200v-5L5.500 14 8 17.500 14 9l8.500 13.200z', S, 1.500, B),
  P('M1 4l6.500 5L15 3l7.500 6v9L16 12l-7 6.500L1 12z', S, 1.500, B) + A,
  P('M1 3h21.500v15.500L16 11.500l-7 7L1 13z', S, 1.500, B) + A,
  R(5, 16, 10, 22) + R(5, 2.500, 10, 16, B, S, 1.500) + R(15, 8, 20, 22) + R(15, 2.500, 20, 8, G, GS) + P('M1 19l8-7 6 5 8-8', K, 1.500) + A,
  R(10, 2, 15.500, 22) + R(15.500, 7, 20.500, 22, G, GS) + R(4.500, 11, 10, 22, B, S, 1.500) + P('M1 19l7-6 8 5 7-8', K, 1.500) + A,
  P('M1 10h6v5H1zM16 10h6v5h-6zM1 15h21v4H1z', OG, 1.200, '#f8b45c') + P('M1 4c5 4 8 5 12 4l9-4v5c-6 2-12 3-21 0z', GS, 1.200, G) + P('M1 9c5 0 6 8 11 8s5-8 10-8v4c-4 0-5 7-10 7S6 13 1 13z', S, 1.400, B) + A,
  R(3, 7, 7, 22) + R(7, 7, 10, 22, W) + R(10, 7, 14, 15, G, GS) + R(13, 2, 16, 13, '#2b88d8', S) + R(17, 2, 22, 22, W) + A,
  R(1, 2, 22.500, 8.500, B, S, 1.500) + R(4, 8.500, 19, 15, B, S, 1.500) + R(7, 15, 15, 21.500, B, S, 1.500),
  R(16.500, 1.500, 20.500, 5.500, K, K, .3) + R(4.500, 15.500, 8, 19, K, K, .3) + R(4, 5.500, 7.500, 9, B, S, .4) + R(10.500, 9.500, 13.500, 12.500, B, S, .4) + R(16.500, 14.500, 20, 18, B, S, .4) + A,
  C(11.500, 11.500, 10.800, W, K, 1.400) + P('M11.500.7a10.800 10.800 0 0 1 8 18.500l-8-7z', S, 1.400, B),
  C(11.500, 11.500, 10.800, B, S, 1.400) + P('M11.500.7A10.800 10.800 0 0 0 .7 11.500h5.800a5 5 0 0 1 5-5z', GS, 1.400, W) + C(11.500, 11.500, 5, '#f3f2f1', S, 1.400),
  R(.7, .7, 22.300, 22.300, W, K, 1.500) + R(1, 1, 11.500, 12, B, S, 1.400) + R(1, 12, 11.500, 22, B, S, 1.400) + P('M11.500 6.500H22M16.500 6.500V22M16.500 14.500H22', K, 1.300),
  C(12.500, 10, 7.500, W, '#504e4c', 1.500) + '<path d="M8 4l4 1v4l-4 2-2-2zM14 5l4 2 1 5-4-2zM9 12l5 1-1 3.500-3-.5zM15 13l3-1-2 4z" fill="#2d9b4b"/>' + P('M10 .5C1 2 0 14 8 18.500c3 1.500 6 1 9-1M12.500 19v3M5 22.300h15', K, 1.500),
  P('M1 2h8l4 4 9-4v12l-8 8-5-4-7-4-1-5 2-2z', K, 1.300, G) + P('M1 2h8l2 9H1.500l2-3z', S, 1.200, B) + P('M12 12l10-1v6l-5 1-3 4h-3zM2 14h8v4H6z', S, 1.200, B),
  '<path d="M14 -1L20 25 12 17 0 19z" fill="#3fa1d8"/><path d="M14 -1L20 25 12 17z" fill="#1a79c4"/><path d="M14 -1l5 15-7 3z" fill="#5fb9e2"/>',
  P('M.8 17a10.700 10.700 0 0 1 21.400 0h-6a5 5 0 0 0-9.500 0z', K, 1.400, W) + P('M7.500 7.500A10.700 10.700 0 0 1 22.200 17h-6a5 5 0 0 0-6-4z', S, 1.400, B) + P('M9.500 17.500L16 9.500l-3 8z', K, 1, K),
  R(.7, 3.500, 22.300, 20, W, K, 1.500) + P('M3 17h17', GS, 1.200) + txt('123', 3, 14.500, 11.500, 17.500),
  tb + P('M5 4v15', GS, 1.600) + P('M7 6h12M7 14h12', S, 1.700) + P('M7 9.500h6M7 17.500h7', GS, 1.300),
  R(.7, 1.500, 22.300, 20, W, K, 1.500) + '<path d="M3 12.500L7.500 5l4.500 7.500z" fill="#3b9b56"/><path d="M11.500 5h9L16 12.500z" fill="#d93f3c"/>' + P('M3 16.500h17', GS, 1.300),
  slc,
  R(.7, .7, 22.300, 22.300, W, K, 1.500) + R(1, 1, 22, 4.500, G, GS, 1) + P('M1 10.500h21M1 16.500h21M8 5v17M15 5v17', GS, 1.300),
  R(.7, .7, 22.300, 22.300, W, K, 1.500) + `<path d="M15 5h7v17H1v-6h14z" fill="${B}"/>` + R(1, 1, 22, 4.500, G, GS, 1) + P('M1 10.500h14M8 5v11M1 16h14V5', GS, 1.200) + P('M15 5v17M1 16h21M8 16v6M15 10.500h7', S, 1.200),
  txt('R', 5, 17.500, 19, 12, 700),
  txt('Py', -.5, 16.500, 19, 23, 600),
  A + P('M1 4.500h16', '#2083c8', 1.500) + C(18.500, 4.500, 3, B, S, 1.400) + P('M1 10.500h11M1 16h6', GS, 1.400) + R(12, 9, 15, 12, W, GS) + R(7, 14.500, 10, 17.500, W, GS),
  P('M8 11h6M15 3.500h-3v16h3', K, 1.500) + R(.7, 8.500, 8, 13.500, B, S, 1.400) + R(14.500, .8, 22.300, 6, B, S, 1.400) + R(14.500, 8.500, 22.300, 13.500, B, S, 1.400) + R(14.500, 16, 22.300, 21.500, B, S, 1.400),
  P('M.8 2h21.500v14H9.500l-5 5v-5H.8z', S, 1.500, W),
  P('M3.500 7V.8H14l6 6v15.500H3.500v-9M14 .8v6h6', K, 1.500, W) + C(3, 9, 2.500, B, S, 1.400) + P('M7 11h9M5 15h7', '#2083c8', 1.300),
  P('M6 .8h11v9c0 7-11 7-11 0zM6 2.500H.8C.8 7 3 11 7 12M17 2.500h5.200C22.200 7 20 11 16 12M11.500 15.500V19', K, 1.500, W) + R(6, .8, 17, 3.500, B, S, 1.300) + R(6.500, 18.500, 17, 22, B, S, 1.300),
  P('M2.800.5h12l5 5v17.800h-17zM14 .5v6h6', K, 1.500, W) + `<path d="M5.500 14h3v8h-3zM10 17h3v5h-3zM14.500 11h3v11h-3z" fill="${K}"/>`,
  R(.7, 4.500, 22.300, 20.500, W, K, 1.500) + P('M3 18h17', GS, 1.200) + txt('123', 4, 15.500, 11.500, 17) + P('M0 0h9v9H0z', 'none', 0, '#f3f2f1') + bolt,
  slc + P('M-1-1h10v12h-10z', 'none', 0, '#f3f2f1') + bolt,
  P('M1 22V1h21v21z', '#2083c8', 1.500, B) + P('M1 22V12h9l1-4 4-1 1-6h6v5l-4 3-3 6-5 2v5z', '#2083c8', 1.300, W) + P('M4-1c5 0 5 4 3.500 7L4 13 .5 6C-1 3-1-1 4-1z', OG, 1, OG) + C(4, 3.500, 1.800, '#fff', '#fff', 0) + C(19.500, 20, 3.200, OG, '#f3f2f1', 1) + C(22.200, 13.800, 2.300, OG, '#f3f2f1', 1),
  P('M8 1.500L.8 11.500l7.200 10M15 1.500l7.200 10-7.200 10M8 1.500q2-1.500 3.500.5L19 11.500 11.500 21q-1.500 2-3.500.5M15 1.500q-2-1.500-3.500.5L4 11.500 11.500 21q1.500 2 3.500.5M8 6l7.500 11M15 6L7.500 17', '#93329e', 1.500),
  P('M1 1.500h14l7.500 10-7.500 9.500H1L8.500 11.500zM1 20.500L15.500 2M7 21l12-14M1 7l5 5', '#1a7fe0', 1.500)
];
set('gallery', vis.map(v => `<svg class="w-[23px] h-[23px] overflow-visible mt-px" viewBox="0 0 23 23">${v}</svg>`).join(''));

/* ---- tables ---- */
set('tables', ['Categories', 'Date Master', 'Geography', 'Product', 'Sales', 'SalesRep', 'SubCategory'].map((n, i) =>
  `<div class="h-[30px] pl-[19px] flex items-center text-[#3b3a39] text-[14.500px] tracking-[-0.02em]"><svg class="w-[9px] h-[15px]" viewBox="0 0 9 15" fill="none" stroke="#605e5c" stroke-width="1.100"><path d="M1 1l7 6.500L1 14"/></svg>
   <svg class="ml-[9px] w-[16px] h-[17px] overflow-visible" viewBox="0.5 0 16 17" fill="none" stroke="${K}" stroke-width="1.400"><rect x="1" y="1" width="14.500" height="14.500" rx="2.500"/><path d="M5.700 1v14.500M10.800 1v14.500M1 5.700h14.500M1 10.800h14.500"/>${i === 1 ? '<rect x="9" y="6.500" width="9" height="11.500" fill="#f3f2f1" stroke="#f3f2f1"/><path d="M9.700 7.500h7.500v9.500H9.700zM9.700 10.500h7.500M12.200 10.500v6.500M14.700 10.500v6.500M9.700 13.700h7.500"/>' : ''}</svg><div class="ml-[6px] pt-px">${n}</div></div>`).join(''));
</script>
</body>
</html>
